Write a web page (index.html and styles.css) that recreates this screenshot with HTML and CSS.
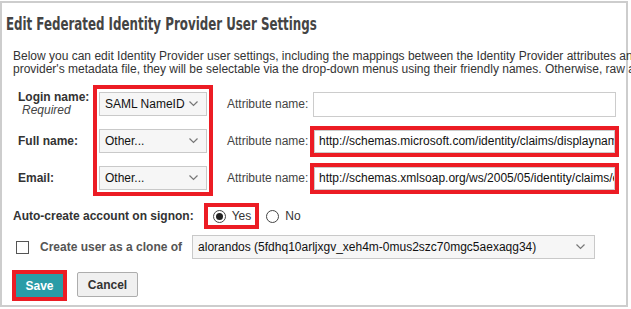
FILE: index.html
```html
<!DOCTYPE html>
<html lang="en">
<head>
    <meta charset="UTF-8">
    <title>Edit Federated Identity Provider User Settings</title>
    <link rel="stylesheet" href="styles.css">
</head>
<body>
    <div class="panel">
        <h1>Edit Federated Identity Provider User Settings</h1>
        <p class="intro">
            Below you can edit Identity Provider user settings, including the mappings between the Identity Provider attributes and<br>
            provider's metadata file, they will be selectable via the drop-down menus using their friendly names. Otherwise, raw attribute
        </p>

        <div class="mapping">
            <div class="map-labels">
                <div class="map-label">
                    <div>
                        <strong>Login name:</strong>
                        <em class="required">Required</em>
                    </div>
                </div>
                <div class="map-label"><strong>Full name:</strong></div>
                <div class="map-label"><strong>Email:</strong></div>
            </div>

            <div class="mark map-selects">
                <div class="select">
                    <span>SAML NameID</span>
                    <svg class="chev" width="9" height="6" viewBox="0 0 9 6"><polyline points="0.5,0.5 4.5,4.5 8.5,0.5" /></svg>
                </div>
                <div class="select">
                    <span>Other...</span>
                    <svg class="chev" width="9" height="6" viewBox="0 0 9 6"><polyline points="0.5,0.5 4.5,4.5 8.5,0.5" /></svg>
                </div>
                <div class="select">
                    <span>Other...</span>
                    <svg class="chev" width="9" height="6" viewBox="0 0 9 6"><polyline points="0.5,0.5 4.5,4.5 8.5,0.5" /></svg>
                </div>
            </div>

            <div class="attrs">
                <div class="attr-row">
                    <span class="attr-label">Attribute name:</span>
                    <div class="input plain"></div>
                </div>
                <div class="attr-row">
                    <span class="attr-label">Attribute name:</span>
                    <div class="mark">
                        <div class="input">http://schemas.microsoft.com/identity/claims/displayname</div>
                    </div>
                </div>
                <div class="attr-row">
                    <span class="attr-label">Attribute name:</span>
                    <div class="mark">
                        <div class="input">http://schemas.xmlsoap.org/ws/2005/05/identity/claims/emailaddress</div>
                    </div>
                </div>
            </div>
        </div>

        <div class="auto-row">
            <strong>Auto-create account on signon:</strong>
            <div class="mark radio-mark">
                <span class="radio checked"></span>
                <span>Yes</span>
            </div>
            <span class="radio radio-no"></span>
            <span>No</span>
        </div>

        <div class="clone-row">
            <span class="checkbox"></span>
            <strong class="clone-label">Create user as a clone of</strong>
            <div class="select wide">
                <span>alorandos (5fdhq10arljxgv_xeh4m-0mus2szc70mgc5aexaqg34)</span>
                <svg class="chev" width="9" height="6" viewBox="0 0 9 6"><polyline points="0.5,0.5 4.5,4.5 8.5,0.5" /></svg>
            </div>
        </div>

        <div class="buttons">
            <div class="mark save-mark">
                <button class="btn-save">Save</button>
            </div>
            <button class="btn-cancel">Cancel</button>
        </div>
    </div>
</body>
</html>
```

FILE: styles.css
```css
body {
    margin: 0;
    font-family: "Liberation Sans", Arial, sans-serif;
    font-size: 12px;
    color: #333;
    background: #fff;
    overflow: hidden;
}
.panel {
    box-sizing: border-box;
    margin-top: 1px;
    width: 628px;
    height: 306px;
    border: 2px solid #cdcdcd;
}
h1 {
    margin: 0;
    padding: 10px 0 0 5px;
    font-family: "DejaVu Sans Condensed", "DejaVu Sans", sans-serif;
    font-size: 17px;
    line-height: 22px;
    color: #444;
    white-space: nowrap;
    transform: scaleX(0.775);
    transform-origin: left center;
}
.intro {
    margin: 15px 0 0 0;
    padding-left: 11px;
    line-height: 13px;
    white-space: nowrap;
    color: #333;
}
.mapping {
    display: flex;
    align-items: flex-start;
    margin-top: 9px;
    padding-left: 16px;
}
.map-labels {
    width: 75px;
    padding-top: 7px;
    display: flex;
    flex-direction: column;
    gap: 13px;
}
.map-label {
    height: 24px;
    display: flex;
    align-items: center;
    line-height: 13px;
}
.map-label strong {
    display: block;
}
.required {
    display: block;
    padding-left: 4px;
    color: #444;
}
.mark {
    border: 4px solid #ec1c24;
}
.map-selects {
    padding: 3px 2px 2px 2px;
    display: flex;
    flex-direction: column;
    gap: 13px;
}
.select {
    box-sizing: border-box;
    width: 108px;
    height: 24px;
    padding: 0 8px 0 5px;
    display: flex;
    align-items: center;
    justify-content: space-between;
    background: #f6f6f6;
    border: 1px solid #c9c9c9;
    color: #111;
    white-space: nowrap;
}
.chev {
    flex: none;
    fill: none;
    stroke: #777;
    stroke-width: 1.2;
}
.attrs {
    margin-left: 14px;
    padding-top: 7px;
    display: flex;
    flex-direction: column;
    gap: 13px;
}
.attr-row {
    height: 24px;
    display: flex;
    align-items: center;
}
.attr-label {
    width: 83px;
    color: #444;
}
.input {
    box-sizing: border-box;
    width: 301px;
    height: 23px;
    padding: 0 4px;
    line-height: 21px;
    border: 1px solid #ccc;
    background: #fff;
    color: #111;
    white-space: nowrap;
    overflow: hidden;
}
.input.plain {
    margin-left: 3px;
    width: 303px;
    height: 25px;
}
.auto-row {
    margin-top: 7px;
    padding-left: 11px;
    display: flex;
    align-items: center;
}
.radio-mark {
    margin-left: 10px;
    height: 18px;
    padding: 0 4px 0 5px;
    display: flex;
    align-items: center;
    gap: 6px;
}
.radio {
    box-sizing: border-box;
    width: 13px;
    height: 13px;
    border: 1px solid #444;
    border-radius: 50%;
    background: #fff;
    display: inline-block;
    position: relative;
}
.radio.checked::after {
    content: "";
    position: absolute;
    left: 2px;
    top: 2px;
    width: 7px;
    height: 7px;
    border-radius: 50%;
    background: #222;
}
.radio-no {
    margin: 0 6px 0 7px;
}
.auto-row span {
    color: #333;
}
.clone-row {
    margin-top: 6px;
    padding-left: 14px;
    display: flex;
    align-items: center;
}
.checkbox {
    box-sizing: border-box;
    width: 13px;
    height: 13px;
    border: 1px solid #555;
    background: #fff;
}
.clone-label {
    margin: 0 10px 0 11px;
    color: #555;
}
.select.wide {
    width: 403px;
    padding-right: 9px;
}
.buttons {
    margin-top: 11px;
    padding-left: 10px;
    display: flex;
    align-items: center;
    gap: 10px;
}
.save-mark {
    display: flex;
}
.btn-save {
    width: 47px;
    height: 23px;
    border: none;
    background: #2a9ca7;
    color: #fff;
    font-family: "Liberation Sans", Arial, sans-serif;
    font-size: 12px;
    font-weight: bold;
    padding: 0;
}
.btn-cancel {
    width: 61px;
    height: 25px;
    border: 1px solid #adadad;
    border-radius: 2px;
    background: #f0f0f0;
    color: #333;
    font-family: "Liberation Sans", Arial, sans-serif;
    font-size: 12px;
    font-weight: bold;
    padding: 0;
    margin-top: -2px;
}
```
